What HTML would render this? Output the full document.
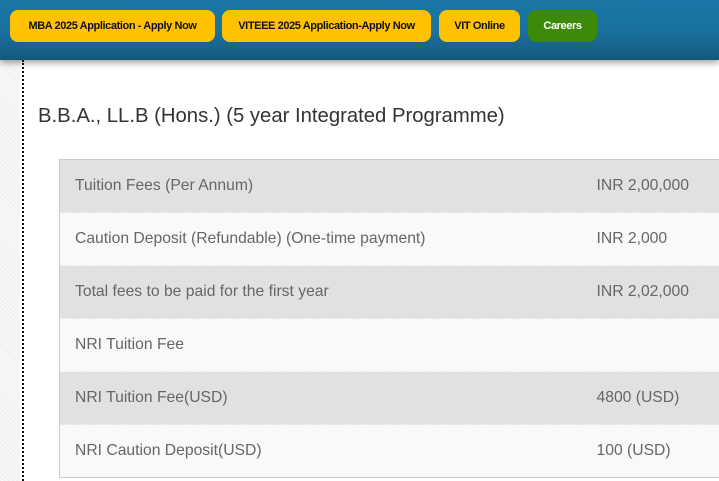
<!DOCTYPE html>
<html><head><meta charset="utf-8"><style>
*{margin:0;padding:0;box-sizing:border-box}
body{width:719px;height:481px;overflow:hidden;background:#fff;font-family:"Liberation Sans",sans-serif;position:relative}
.hdr{position:absolute;left:0;top:0;width:719px;height:60px;background:linear-gradient(#1a76a6 0,#1a72a0 30px,#14587d 60px);box-shadow:0 3px 6px rgba(0,0,0,.35);z-index:2}
.btn{position:absolute;top:10px;height:32px;border-radius:8px;background:#ffc200;color:#111;font-weight:bold;font-size:11px;line-height:32px;text-align:center;letter-spacing:-0.4px;white-space:nowrap}
.strip{position:absolute;left:0;top:60px;width:20px;height:421px;background:repeating-linear-gradient(45deg,#eee 0 1px,#f8f8f8 1px 3px)}
.dot{position:absolute;left:22px;top:60px;height:421px;border-left:2px dotted #111}
h1{position:absolute;left:38px;top:105px;font-weight:normal;font-size:20.3px;color:#333}
table{position:absolute;left:59px;top:159px;width:680px;border-collapse:collapse;border:1px solid #ccc;font-size:15.7px;color:#666}
td{height:53px;padding-left:15px;border-bottom:1px dashed #eee}
tr:nth-child(odd){background:#e1e1e1}tr:nth-child(even){background:#f9f9f9}
td.c2{width:142px;padding-left:0}
</style></head><body>
<div class="hdr">
<div class="btn" style="left:10px;width:205px">MBA 2025 Application - Apply Now</div>
<div class="btn" style="left:222px;width:209px">VITEEE 2025 Application-Apply Now</div>
<div class="btn" style="left:439px;width:81px">VIT Online</div>
<div class="btn" style="left:528px;width:69px;background:#3d8a0a;color:#fff">Careers</div>
</div>
<div class="strip"></div><div class="dot"></div>
<h1>B.B.A., LL.B (Hons.) (5 year Integrated Programme)</h1>
<table>
<tr><td>Tuition Fees (Per Annum)</td><td class="c2">INR 2,00,000</td></tr>
<tr><td>Caution Deposit (Refundable) (One-time payment)</td><td class="c2">INR 2,000</td></tr>
<tr><td>Total fees to be paid for the first year</td><td class="c2">INR 2,02,000</td></tr>
<tr><td>NRI Tuition Fee</td><td class="c2"></td></tr>
<tr><td>NRI Tuition Fee(USD)</td><td class="c2">4800 (USD)</td></tr>
<tr><td>NRI Caution Deposit(USD)</td><td class="c2">100 (USD)</td></tr>
</table>
</body></html>
